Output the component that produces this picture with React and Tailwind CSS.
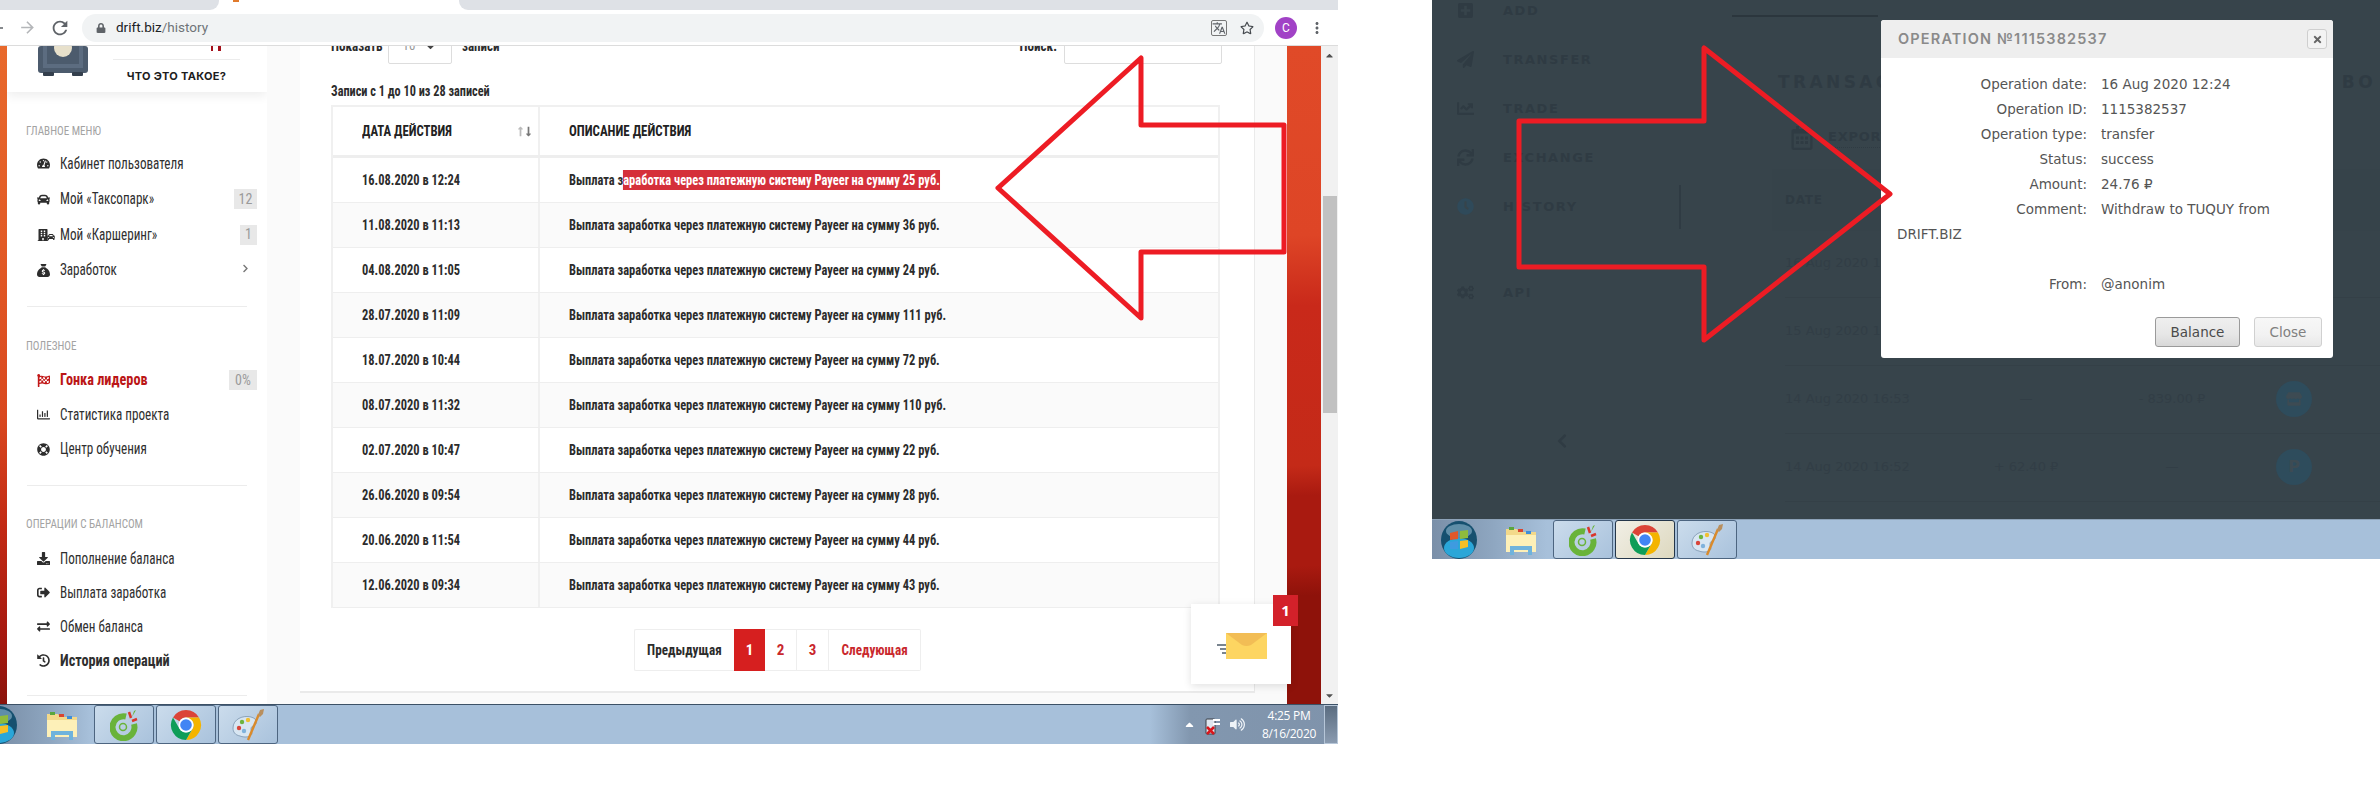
import React from 'react';
import { FaTachometerAlt, FaCar, FaBuilding, FaFlagCheckered, FaRegChartBar, FaLifeRing, FaDownload, FaSignOutAlt, FaExchangeAlt, FaHistory, FaChevronRight, FaPlusSquare, FaPaperPlane, FaChartLine, FaSync, FaClock, FaCogs, FaCaretDown, FaCaretUp, FaChevronLeft, FaRegStar, FaLock, FaTimes, FaLongArrowAltUp, FaLongArrowAltDown, FaRegCalendarAlt, FaStore, FaVolumeUp } from 'react-icons/fa';
import { FaSackDollar } from 'react-icons/fa6';
import { MdRefresh, MdArrowForward, MdArrowBack, MdMoreVert, MdTranslate } from 'react-icons/md';

const rows = [
  ['16.08.2020 в 12:24', '25'], ['11.08.2020 в 11:13', '36'], ['04.08.2020 в 11:05', '24'], ['28.07.2020 в 11:09', '111'], ['18.07.2020 в 10:44', '72'],
  ['08.07.2020 в 11:32', '110'], ['02.07.2020 в 10:47', '22'], ['26.06.2020 в 09:54', '28'], ['20.06.2020 в 11:54', '44'], ['12.06.2020 в 09:34', '43'],
];

function Orb() {
  return (
    <svg width="36" height="38" viewBox="0 0 36 38" className="shrink-0">
      <ellipse cx="18" cy="19" rx="18" ry="19" fill="#16506f" />
      <ellipse cx="18" cy="27" rx="15" ry="10" fill="#2aa6d8" />
      <ellipse cx="18" cy="10" rx="13" ry="7" fill="#5f8ea8" />
      <path d="M9 12 L17 10 L17 18 L9 19Z" fill="#e2572b" />
      <path d="M19 10 L27 9 L27 17 L19 18Z" fill="#8fbb3c" />
      <path d="M9 21 L17 20 L17 28 L9 28Z" fill="#3e9be0" />
      <path d="M19 20 L27 19 L27 26 L19 28Z" fill="#f6bf26" />
    </svg>
  );
}
function Folder() {
  return (
    <svg width="32" height="30" viewBox="0 0 32 30" className="shrink-0">
      <path d="M1 4 L12 4 L14 7 L31 7 L31 27 L1 27Z" fill="#f3d98a" />
      <path d="M1 10 L31 10 L31 27 L1 27Z" fill="#fdf0b8" />
      <rect x="4" y="2" width="5" height="3" fill="#5aa63c" />
      <rect x="13" y="4" width="5" height="3" fill="#d9452f" />
      <rect x="21" y="6" width="5" height="3" fill="#3f8ed8" />
      <path d="M5 21 L27 21 L27 30 L23 30 L23 25 L9 25 L9 30 L5 30Z" fill="#6fb3dc" />
    </svg>
  );
}
function CleanIcon() {
  return (
    <svg width="28" height="32" viewBox="0 0 28 32">
      <path d="M16 7.5 A11 11 0 1 0 24 15" fill="none" stroke="#69b33a" strokeWidth="6" />
      <circle cx="13" cy="18" r="3.5" fill="none" stroke="#69b33a" strokeWidth="1.5" />
      <path d="M19 3 L21 9" stroke="#d9362b" strokeWidth="2.5" />
      <path d="M22 12 L27 10" stroke="#d9362b" strokeWidth="2.5" />
      <path d="M24 2 L26 1 L22 8Z" fill="#69b33a" />
    </svg>
  );
}
function ChromeIcon() {
  return (
    <svg width="32" height="32" viewBox="0 0 32 32">
      <path d="M16 1 A15 15 0 0 1 29 8.5 L16 8.5 A7.5 7.5 0 0 0 9.5 12.2 L3 8.5 A15 15 0 0 1 16 1Z" fill="#db4437" />
      <path d="M29 8.5 A15 15 0 0 1 16 31 L22.5 20 A7.5 7.5 0 0 0 22.5 12 L16 8.5Z" fill="#f4b400" />
      <path d="M3 8.5 A15 15 0 0 0 16 31 L22.5 19.8 A7.5 7.5 0 0 1 9.5 19.8Z" fill="#0f9d58" />
      <circle cx="16" cy="16" r="7.5" fill="#fff" />
      <circle cx="16" cy="16" r="5.8" fill="#4285f4" />
    </svg>
  );
}
function PaintIcon() {
  return (
    <svg width="34" height="34" viewBox="0 0 34 34">
      <path d="M2 20 C2 11 12 7 20 9 C27 11 27 16 22 18 C19 19 20 23 21 25 C21 29 14 30 9 28 C4 27 2 24 2 20Z" fill="#d8e6f2" stroke="#7a93ad" strokeWidth="0.8" />
      <circle cx="8" cy="20" r="2.2" fill="#d9453a" />
      <circle cx="11" cy="14" r="2.2" fill="#6eb43f" />
      <circle cx="17" cy="12" r="2.2" fill="#f0c033" />
      <circle cx="13" cy="23" r="2.2" fill="#7fb2dc" />
      <path d="M17 32 L28 6" stroke="#d98a2b" strokeWidth="2.4" />
      <path d="M27 7 L29 2 L33 1 L32 6 L29 9Z" fill="#b98f5e" />
    </svg>
  );
}
function TaskBtn({ children, active }) {
  return (
    <div className={active
      ? 'w-[60px] h-full shrink-0 flex items-center justify-center rounded-[3px] border border-[#24364a] bg-[linear-gradient(135deg,#f1efe6,#ddd8bf)]'
      : 'w-[60px] h-full shrink-0 flex items-center justify-center rounded-[3px] border border-[#4d6580] bg-[linear-gradient(135deg,#cbdcec,#a9c2dc)]'}>
      {children}
    </div>
  );
}
function Taskbar({ right, activeChrome, wide }) {
  return (
    <div className={wide
      ? 'h-[40px] shrink-0 overflow-hidden flex items-center border-t border-t-[#8da2b8] pl-[9px] bg-[#a7c0da] bg-[linear-gradient(90deg,#7a8fa8_0,#8ea6c0_60px,#a7c0da_115px)]'
      : 'h-[40px] shrink-0 overflow-hidden flex items-center border-t border-t-[#3c5166] bg-[#a7c0da] bg-[linear-gradient(90deg,#7a8fa8_0,#8ea6c0_50px,#a7c0da_90px)]'}>
      <div className={wide ? 'shrink-0' : 'shrink-0 -ml-[19px]'}><Orb /></div>
      <div className={wide ? 'ml-[28px] shrink-0' : 'ml-[29px] shrink-0'}><Folder /></div>
      <div className="ml-[16px] flex gap-[2px] h-full">
        <TaskBtn><CleanIcon /></TaskBtn>
        <TaskBtn active={activeChrome}><ChromeIcon /></TaskBtn>
        <TaskBtn><PaintIcon /></TaskBtn>
      </div>
      {right && (
        <div className="ml-auto h-full w-[188px] flex items-center bg-[linear-gradient(90deg,#a7c0da_0,#8297af_40px,#7f93ab_100%)] text-white [font-family:'Open_Sans',sans-serif]">
          <FaCaretUp className="ml-[33px] text-[13px] text-white shrink-0" />
          <svg width="16" height="22" viewBox="0 0 16 22" className="ml-[9px] shrink-0">
            <rect x="1" y="5" width="9" height="15" rx="1" fill="#dfe6ee" stroke="#3a3f46" />
            <path d="M8 6 L15 6 M8 10 L15 10" stroke="#fff" strokeWidth="2" />
            <path d="M2 13 L9 20 M9 13 L2 20" stroke="#d9161c" strokeWidth="2.6" />
          </svg>
          <FaVolumeUp className="ml-[9px] text-[15px] text-[#eef3f8] shrink-0" />
          <div className="ml-[15px] w-[58px] flex flex-col items-center text-[12px] leading-[18px] tracking-tight">
            <span>4:25 PM</span>
            <span>8/16/2020</span>
          </div>
          <div className="ml-auto w-[14px] h-full border border-[#b6c6d8] bg-[linear-gradient(180deg,#5a6c80,#8a9bb0)]" />
        </div>
      )}
    </div>
  );
}

function Badge({ children, w }) {
  return <span className={'ml-auto h-[20px] flex items-center justify-center bg-[#e8e8e8] text-[#9a9a9a] text-[14px] ' + w}>{children}</span>;
}
function Item({ icon, children, h, bold, red, badge }) {
  return (
    <div className={'flex items-center pl-[30px] ' + h}>
      <span className={red ? 'w-[23px] shrink-0 text-[13px] text-[#c21818]' : 'w-[23px] shrink-0 text-[13px] text-[#2d2d2d]'}>{icon}</span>
      <span className={'inline-block origin-left whitespace-nowrap text-[16px] '
        + (bold ? 'font-bold scale-x-[.89] ' : 'scale-x-[.82] ')
        + (red ? 'text-[#bb1616]' : 'text-[#2f2f2f]')}>{children}</span>
      {badge}
    </div>
  );
}
function Label({ children }) {
  return (
    <div className="pl-[19px] h-[20px] flex items-center mt-[28px]">
      <span className="inline-block origin-left scale-x-[.82] text-[13.5px] text-[#a3a3a3] whitespace-nowrap">{children}</span>
    </div>
  );
}
function Divider({ className }) {
  return <div className={'mx-[20px] h-px bg-[#ececec] ' + className} />;
}

function Sidebar() {
  return (
    <aside className="w-[260px] shrink-0 bg-white flex flex-col overflow-hidden">
      <div className="h-[46px] shrink-0 flex shadow-[0_4px_10px_rgba(0,0,0,0.07)]">
        <svg width="50" height="30" viewBox="0 0 50 30" className="ml-[31px] shrink-0">
          <rect x="0" y="0" width="50" height="27" rx="3" fill="#4c5b6d" />
          <rect x="5" y="0" width="40" height="22" fill="#5c6c80" />
          <rect x="9" y="0" width="32" height="18" fill="#4c5b6d" />
          <circle cx="25" cy="2" r="9" fill="#e7e0cb" />
          <rect x="5" y="26" width="11" height="4" rx="1" fill="#343f4d" />
          <rect x="34" y="26" width="11" height="4" rx="1" fill="#343f4d" />
        </svg>
        <div className="ml-[25px] w-[127px] flex flex-col">
          <div className="h-[14px] border-b border-[#ececec] flex justify-end items-start gap-[5px] pr-[19px]">
            <span className="w-[2px] h-[5px] bg-[#a5101a]" />
            <span className="w-[3px] h-[5px] bg-[#a5101a]" />
          </div>
          <div className="flex-1 flex items-center justify-center text-[11px] font-bold tracking-[0.03em] text-[#1d1d1d] whitespace-nowrap [font-family:Inter,sans-serif]">ЧТО ЭТО ТАКОЕ?</div>
        </div>
      </div>
      <Label>ГЛАВНОЕ МЕНЮ</Label>
      <div className="mt-[6px]">
        <Item h="h-[35.5px]" icon={<FaTachometerAlt />}>Кабинет пользователя</Item>
        <Item h="h-[35.5px]" icon={<FaCar />} badge={<Badge w="w-[23px] mr-[10px]">12</Badge>}>Мой «Таксопарк»</Item>
        <Item h="h-[35.5px]" icon={<span className="flex items-end"><FaBuilding className="text-[12px]" /><FaCar className="text-[8px] -ml-[2px]" /></span>} badge={<Badge w="w-[17px] mr-[10px]">1</Badge>}>Мой «Каршеринг»</Item>
        <Item h="h-[35.5px]" icon={<FaSackDollar />} badge={<FaChevronRight className="ml-auto mr-[17px] mb-[4px] text-[9px] text-[#777]" />}>Заработок</Item>
      </div>
      <Divider className="mt-[18px]" />
      <Label>ПОЛЕЗНОЕ</Label>
      <div className="mt-[8px]">
        <Item h="h-[34.5px]" red bold icon={<FaFlagCheckered />} badge={<Badge w="w-[28px] mr-[10px]">0%</Badge>}>Гонка лидеров</Item>
        <Item h="h-[34.5px]" icon={<FaRegChartBar />}>Статистика проекта</Item>
        <Item h="h-[34.5px]" icon={<FaLifeRing />}>Центр обучения</Item>
      </div>
      <Divider className="mt-[18px]" />
      <Label>ОПЕРАЦИИ С БАЛАНСОМ</Label>
      <div className="mt-[8px]">
        <Item h="h-[34px]" icon={<FaDownload />}>Пополнение баланса</Item>
        <Item h="h-[34px]" icon={<FaSignOutAlt />}>Выплата заработка</Item>
        <Item h="h-[34px]" icon={<FaExchangeAlt />}>Обмен баланса</Item>
        <Item h="h-[34px]" bold icon={<FaHistory />}>История операций</Item>
      </div>
      <Divider className="mt-[17px]" />
    </aside>
  );
}

function TableRow({ row, i }) {
  const amount = row[1];
  return (
    <div className={'grid grid-cols-[207px_1fr] h-[45px] border-b border-[#eeeeee] text-[15px] text-[#2c2c2c] font-bold ' + (i % 2 ? 'bg-[#fafafa]' : 'bg-white')}>
      <div className="flex items-center pl-[29px] border-r-2 border-[#f0f0f0] overflow-hidden">
        <span className="inline-block origin-left scale-x-[.83] whitespace-nowrap">{row[0]}</span>
      </div>
      <div className="flex items-center pl-[29px] overflow-hidden">
        {i === 0 ? (
          <span className="inline-flex items-center origin-left scale-x-[.83] whitespace-nowrap">
            <span>Выплата з</span>
            <span className="h-[20px] flex items-center bg-[#d5303a] text-white">аработка через платежную систему Payeer на сумму {amount} руб.</span>
          </span>
        ) : (
          <span className="inline-block origin-left scale-x-[.83] whitespace-nowrap">Выплата заработка через платежную систему Payeer на сумму {amount} руб.</span>
        )}
      </div>
    </div>
  );
}

function Pager() {
  return (
    <div className="mt-[21px] ml-[303px] flex h-[42px] text-[15px] font-bold">
      <div className="w-[100px] flex items-center justify-center border border-r-0 border-[#eeeeee] text-[#2c2c2c] rounded-l-[2px]"><span className="inline-block scale-x-[.88] whitespace-nowrap">Предыдущая</span></div>
      <div className="w-[31px] flex items-center justify-center bg-[#d61f1f] text-white">1</div>
      <div className="w-[32px] flex items-center justify-center border-y border-r border-[#eeeeee] text-[#c9282d]">2</div>
      <div className="w-[32px] flex items-center justify-center border-y border-r border-[#eeeeee] text-[#c9282d]">3</div>
      <div className="w-[92px] flex items-center justify-center border-y border-r border-[#eeeeee] text-[#c9282d] rounded-r-[2px]"><span className="inline-block scale-x-[.88] whitespace-nowrap">Следующая</span></div>
    </div>
  );
}

function MainCard() {
  return (
    <main className="flex-1 bg-[#fafafa] pl-[33px] pr-[32px] overflow-hidden">
      <div className="h-[647px] bg-white border-r border-b-2 border-[#eaeaea] overflow-hidden px-[31px] pr-[34px]">
        <div className="-mt-[18px] h-[36px] flex items-center text-[15px] font-bold text-[#2c2c2c]">
          <span className="w-[57px] inline-block origin-left scale-x-[.87] whitespace-nowrap">Показать</span>
          <div className="w-[64px] h-[36px] border border-[#dddddd] rounded-[2px] flex items-center justify-center gap-[9px] font-normal text-[13px] text-[#999]">
            <span>10</span><FaCaretDown className="text-[#444]" />
          </div>
          <span className="ml-[10px] inline-block origin-left scale-x-[.87]">записи</span>
          <span className="ml-auto mr-[7px] inline-block origin-right scale-x-[.87]">Поиск:</span>
          <div className="w-[158px] h-[36px] border border-[#dddddd] rounded-[2px] -mr-[2px]" />
        </div>
        <div className="mt-[17px] h-[20px] flex items-center text-[14px] font-bold text-[#2c2c2c]">
          <span className="inline-block origin-left scale-x-[.875] whitespace-nowrap">Записи с 1 до 10 из 28 записей</span>
        </div>
        <div className="mt-[4px] border-2 border-[#f0f0f0] border-b-0">
          <div className="grid grid-cols-[207px_1fr] h-[51px] border-b-[3px] border-[#eeeeee] text-[15px] font-bold text-[#222]">
            <div className="flex items-center pl-[29px] pr-[4px] border-r-2 border-[#f0f0f0]">
              <span className="inline-block origin-left scale-x-[.85] whitespace-nowrap">ДАТА ДЕЙСТВИЯ</span>
              <span className="ml-auto flex text-[#bbb] text-[11px]"><FaLongArrowAltUp /><FaLongArrowAltDown className="-ml-[3px] text-[#777]" /></span>
            </div>
            <div className="flex items-center pl-[29px]">
              <span className="inline-block origin-left scale-x-[.86] whitespace-nowrap">ОПИСАНИЕ ДЕЙСТВИЯ</span>
            </div>
          </div>
          {rows.map((r, i) => <TableRow key={r[0]} row={r} i={i} />)}
        </div>
        <Pager />
      </div>
    </main>
  );
}

function Scrollbar() {
  return (
    <div className="w-[17px] shrink-0 bg-[#f1f1f1] flex flex-col items-center text-[#505050] text-[11px]">
      <FaCaretUp className="mt-[4px]" />
      <div className="mt-[135px] w-[14px] h-[217px] bg-[#c1c1c1]" />
      <FaCaretDown className="mt-auto mb-[3px]" />
    </div>
  );
}

function MailWidget() {
  return (
    <div className="absolute left-[1191px] top-[604px] w-[100px] h-[80px] bg-white shadow-[0_2px_8px_rgba(0,0,0,0.12)] flex items-center justify-center">
      <svg width="52" height="28" viewBox="0 0 52 28" className="ml-[1px] mt-[4px]">
        <path d="M1 13 H10 M4 17 H10 M6 21 H10" stroke="#4d5c6b" strokeWidth="1.4" />
        <rect x="10" y="1" width="41" height="26" fill="#fdd561" />
        <path d="M10 1 L26 13 Q30.5 15 35 13 L51 1Z" fill="#f2bd55" />
      </svg>
      <span className="absolute -top-[9px] -right-[7px] w-[25px] h-[31px] flex items-center justify-center bg-[#d3212a] text-white text-[15px] font-bold">1</span>
    </div>
  );
}

function LeftShot() {
  return (
    <section className="w-[1338px] h-[744px] shrink-0 flex flex-col [font-family:'Liberation_Sans_Narrow','Roboto_Condensed',Roboto,sans-serif]">
      <div className="h-[10px] shrink-0 flex bg-white">
        <div className="w-[219px] bg-[#dee1e6] rounded-br-[9px]" />
        <div className="w-[240px] pl-[14px]"><div className="w-[6px] h-[2px] bg-[#e07a2c]" /></div>
        <div className="flex-1 bg-[#dee1e6] rounded-bl-[9px]" />
      </div>
      <div className="h-[36px] shrink-0 flex items-center bg-white border-b border-[#dcdcdc] [font-family:Roboto,sans-serif]">
        <MdArrowBack className="-ml-[12px] text-[18px] text-[#5f6368] shrink-0" />
        <MdArrowForward className="ml-[12px] text-[19px] text-[#b4b6b9] shrink-0" />
        <MdRefresh className="ml-[12px] text-[22px] text-[#5f6368] shrink-0" />
        <div className="ml-[11px] w-[1182px] h-[28px] rounded-full bg-[#f1f3f4] flex items-center pl-[14px] pr-[10px]">
          <FaLock className="text-[10px] text-[#5f6368]" />
          <span className="ml-[10px] text-[13.5px] text-[#202124]">drift.biz<span className="text-[#6f7378]">/history</span></span>
          <MdTranslate className="ml-auto text-[16px] text-[#5f6368] border border-[#777] rounded-[2px]" />
          <FaRegStar className="ml-[13px] text-[14px] text-[#45494e]" />
        </div>
        <div className="ml-[11px] w-[22px] h-[22px] rounded-full bg-[#a142c6] flex items-center justify-center text-[12px] text-white">C</div>
        <MdMoreVert className="ml-[11px] text-[18px] text-[#5f6368]" />
      </div>
      <div className="h-[658px] shrink-0 flex overflow-hidden">
        <div className="w-[7px] shrink-0 bg-[linear-gradient(180deg,#e8692c_0,#e25a25_200px,#d9481f_370px,#c22a14_480px,#a4170f_600px,#8a130b_658px)]" />
        <Sidebar />
        <MainCard />
        <div className="w-[34px] shrink-0 bg-[linear-gradient(178deg,#e04a28_0,#de4526_190px,#c9291a_260px,#c42a18_420px,#a91a10_450px,#a91a10_520px,#8e120a_550px)]" />
        <Scrollbar />
      </div>
      <Taskbar right />
    </section>
  );
}

function DimItem({ icon, children, bar, iconClass }) {
  return (
    <div className={'h-[49px] flex items-center ' + (bar ? 'relative' : '')}>
      <span className={'w-[22px] flex justify-center text-[17px] shrink-0 ' + (iconClass || 'text-[#2f3b43]')}>{icon}</span>
      <span className="ml-[27px] text-[13px] font-semibold tracking-[0.12em] text-[#2f3b43]">{children}</span>
      {bar && <span className="absolute left-[225px] top-[3px] w-[2px] h-[44px] bg-[#2f3b43]" />}
    </div>
  );
}
function DimRow({ date, a, b, icon, h }) {
  return (
    <div className={'grid grid-cols-[180px_122px_170px_74px] items-center border-b border-[#344047] text-[13px] text-[#323e46] ' + (h || 'h-[68px]')}>
      <span className="whitespace-nowrap">{date}</span>
      <span className="text-center whitespace-nowrap">{a}</span>
      <span className="text-center whitespace-nowrap">{b}</span>
      <span className="flex justify-center">{icon}</span>
    </div>
  );
}
function Circle({ children }) {
  return <span className="w-[36px] h-[36px] rounded-full bg-[#2e4c5c] flex items-center justify-center text-[#3d4b53] font-bold text-[16px]">{children}</span>;
}

function Dialog() {
  const f = [['Operation date:', '16 Aug 2020 12:24'], ['Operation ID:', '1115382537'], ['Operation type:', 'transfer'], ['Status:', 'success'], ['Amount:', '24.76 ₽'], ['Comment:', 'Withdraw to TUQUY from']];
  return (
    <div className="absolute left-[449px] top-[20px] w-[452px] h-[338px] bg-white rounded-[3px] flex flex-col overflow-hidden">
      <div className="h-[38px] shrink-0 bg-[#eeeeee] flex items-center pl-[17px] pr-[6px]">
        <span className="text-[14.5px] font-semibold tracking-[0.08em] text-[#8a8a8a] [font-family:Inter,sans-serif]">OPERATION №1115382537</span>
        <span className="ml-auto w-[20px] h-[20px] border border-[#cfcfcf] rounded-[3px] bg-[#f3f3f3] flex items-center justify-center text-[#666] text-[11px]"><FaTimes /></span>
      </div>
      <div className="pt-[14px] text-[13.5px] leading-[25px] text-[#555555]">
        {f.map(([l, v]) => (
          <div key={l} className="flex h-[25px]">
            <span className="w-[206px] text-right shrink-0">{l}</span>
            <span className="ml-[14px] whitespace-nowrap">{v}</span>
          </div>
        ))}
        <div className="pl-[16px] h-[25px]">DRIFT.BIZ</div>
        <div className="flex h-[25px] mt-[25px]">
          <span className="w-[206px] text-right shrink-0">From:</span>
          <span className="ml-[14px]">@anonim</span>
        </div>
      </div>
      <div className="mt-[20px] flex justify-end gap-[14px] pr-[11px] text-[13.5px]">
        <span className="w-[85px] h-[30px] flex items-center justify-center rounded-[3px] border border-[#9a9a9a] bg-[linear-gradient(180deg,#efefef_0,#e6e6e6_60%,#d8d8d8_100%)] text-[#4a4a4a]">Balance</span>
        <span className="w-[68px] h-[30px] flex items-center justify-center rounded-[3px] border border-[#d0d0d0] bg-[linear-gradient(180deg,#f7f7f7_0,#f2f2f2_60%,#e8e8e8_100%)] text-[#808080]">Close</span>
      </div>
    </div>
  );
}

function RightShot() {
  return (
    <section className="w-[948px] h-[558px] shrink-0 flex flex-col [font-family:'DejaVu_Sans',sans-serif]">
      <div className="h-[519px] shrink-0 relative bg-[#37444b] flex overflow-hidden">
        <div className="w-[300px] shrink-0 pl-[22px] -mt-[14px]">
          <DimItem icon={<FaPlusSquare />}>ADD</DimItem>
          <DimItem icon={<FaPaperPlane />}>TRANSFER</DimItem>
          <DimItem icon={<FaChartLine />}>TRADE</DimItem>
          <DimItem icon={<FaSync />}>EXCHANGE</DimItem>
          <DimItem bar iconClass="text-[#2f4a5a]" icon={<FaClock />}>HISTORY</DimItem>
          <div className="mt-[37px]"><DimItem icon={<FaCogs />}>API</DimItem></div>
          <FaChevronLeft className="mt-[116px] ml-[100px] text-[16px] text-[#2f3b43]" />
        </div>
        <div className="flex-1 min-w-0">
          <div className="mt-[15px] w-[146px] h-[2px] bg-[#2b363d]" />
          <div className="mt-[53px] pl-[46px] pr-[4px] flex justify-between text-[17px] font-semibold tracking-[0.2em] text-[#2f3b43]">
            <span>TRANSACTIONS</span><span>BO</span>
          </div>
          <div className="mt-[30px] pl-[58px] flex items-center text-[#2f3b43]">
            <FaRegCalendarAlt className="text-[24px]" />
            <span className="ml-[14px] text-[13px] font-semibold tracking-[0.06em] border-b border-dotted border-[#2f3b43]">EXPORT</span>
          </div>
          <div className="mt-[19px] ml-[40px] h-[62px] flex items-center pl-[13px] bg-[#36434a] text-[12px] font-bold tracking-[0.06em] text-[#2f3b43]">DATE</div>
          <div className="pl-[53px] mt-[-1px]">
            <DimRow h="h-[68px]" date="16 Aug 2020 12:24" a="—" b="- 24.76 ₽" icon={<Circle>P</Circle>} />
            <DimRow date="15 Aug 2020 11:13" a="—" b="- 36.00 ₽" icon={<Circle>P</Circle>} />
            <DimRow date="14 Aug 2020 16:53" a="—" b="- 839.00 ₽" icon={<Circle><FaStore /></Circle>} />
            <DimRow date="14 Aug 2020 16:52" a="+ 62.40 ₽" b="—" icon={<Circle>P</Circle>} />
            <div className="mt-[17px] flex justify-end pr-[50px]"><Circle /></div>
          </div>
        </div>
        <Dialog />
      </div>
      <Taskbar wide activeChrome />
    </section>
  );
}

function Arrows() {
  return (
    <svg width="2380" height="806" viewBox="0 0 2380 806" fill="none" stroke="#ed1c24" strokeWidth="5" strokeLinejoin="round" className="absolute left-0 top-0 pointer-events-none">
      <path d="M998 188 L1141 58 L1141 125 L1284 125 L1284 252 L1141 252 L1141 318Z" />
      <path d="M1890 194 L1704 48 L1704 121 L1519 121 L1519 267 L1704 267 L1704 340Z" />
    </svg>
  );
}

export default function App() {
  return (
    <div className="relative w-[2380px] h-[806px] bg-white overflow-hidden flex items-start">
      <LeftShot />
      <div className="w-[94px] shrink-0" />
      <RightShot />
      <MailWidget />
      <Arrows />
    </div>
  );
}
